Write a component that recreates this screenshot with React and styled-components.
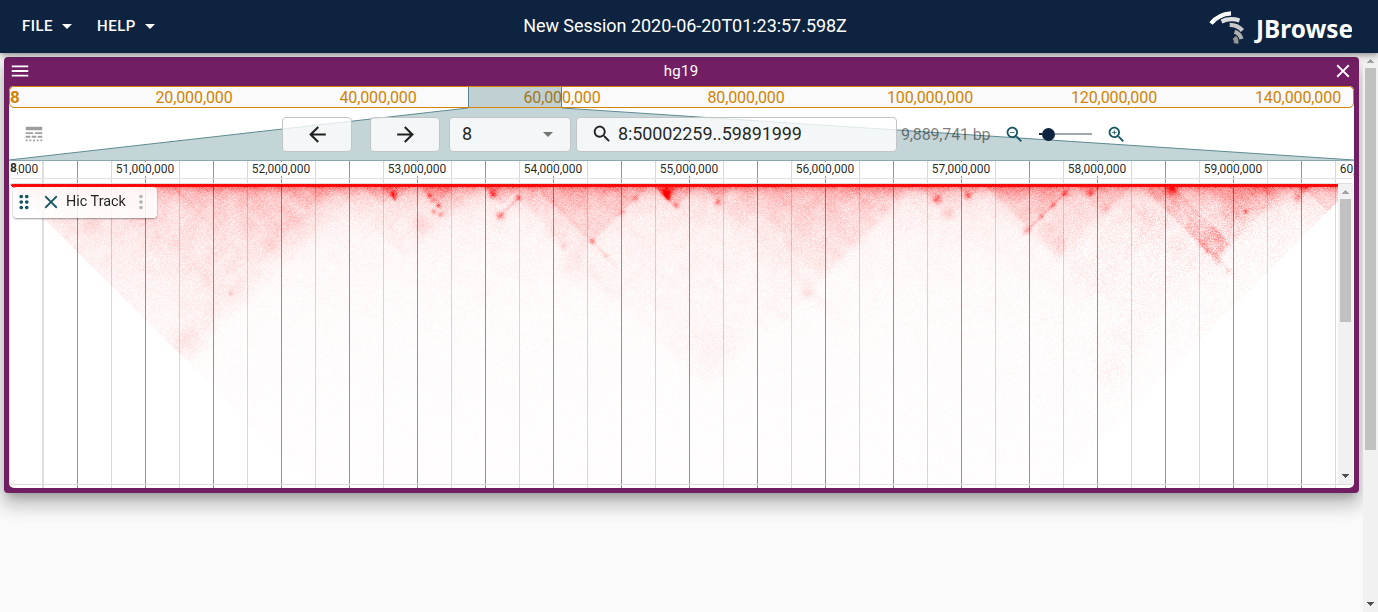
import React, { useLayoutEffect, useRef } from "react";
import styled, { createGlobalStyle } from "styled-components";

const GlobalStyle = createGlobalStyle`
  * { box-sizing: border-box; }
  html, body, #root { height: 100%; }
  body {
    margin: 0;
    overflow: hidden;
    background: #fafafa;
    font-family: Roboto, "Liberation Sans", sans-serif;
    color: rgba(0, 0, 0, 0.87);
  }
`;

const PURPLE = "#721e63";
const NAVY = "#0d233f";
const TEAL = "#135560";

const Page = styled.div`
  display: flex;
  flex-direction: column;
  height: 612px;
  width: 1378px;
`;

const AppBar = styled.header`
  display: grid;
  grid-template-columns: 1fr auto 1fr;
  align-items: center;
  height: 53px;
  padding: 0 26px 1px 22px;
  flex: none;
  background: ${NAVY};
  color: #fff;
  position: relative;
  z-index: 2;
  box-shadow: 0 2px 4px -1px rgba(0, 0, 0, 0.2), 0 4px 5px rgba(0, 0, 0, 0.14), 0 1px 10px rgba(0, 0, 0, 0.12);
`;

const MenuGroup = styled.nav`
  display: flex;
  gap: 25px;
`;

const MenuButton = styled.button`
  display: flex;
  align-items: center;
  gap: 9px;
  padding: 0;
  border: 0;
  background: none;
  color: inherit;
  font: 500 15px/24px Roboto, sans-serif;
  letter-spacing: 0.5px;
`;

const SessionName = styled.div`
  font-size: 18px;
  line-height: 24px;
  letter-spacing: -0.04px;
  margin-right: 4px;
  white-space: nowrap;
`;

const LogoSlot = styled.div`
  display: flex;
  justify-content: flex-end;
`;

const Body = styled.div`
  display: flex;
  flex: 1;
  min-height: 0;
`;

const Workspace = styled.main`
  flex: 1;
  min-width: 0;
  padding: 4px;
  overflow: hidden;
`;

const ViewFrame = styled.section`
  display: flex;
  flex-direction: column;
  height: 436px;
  padding: 0 5px 5px;
  border-radius: 4px;
  background: ${PURPLE};
  box-shadow: 0 7px 8px -4px rgba(0, 0, 0, 0.2), 0 12px 17px 2px rgba(0, 0, 0, 0.14), 0 5px 22px 4px rgba(0, 0, 0, 0.12);
`;

const TitleBar = styled.div`
  display: grid;
  grid-template-columns: 24px 1fr 22px;
  align-items: center;
  height: 29px;
  padding-bottom: 2px;
  flex: none;
  color: #fff;
`;

const ViewTitle = styled.div`
  text-align: center;
  padding-right: 3px;
  font-size: 15px;
  letter-spacing: 0.3px;
`;

const ViewContent = styled.div`
  display: flex;
  flex-direction: column;
  flex: 1;
  min-height: 0;
  background: #fff;
  border-radius: 5px;
  overflow: hidden;
`;

const Overview = styled.div`
  position: relative;
  display: flex;
  align-items: center;
  height: 22px;
  flex: none;
  padding-left: 92px;
  overflow: hidden;
  background: #fafafa;
  border: 1px solid #d38300;
  border-radius: 5px;
`;

const OverviewLabel = styled.span`
  width: 184px;
  flex: none;
  text-align: center;
  font-size: 16px;
  line-height: 20px;
  letter-spacing: -0.1px;
  color: #d38300;
  padding-top: 2px;
`;

const OverviewRef = styled.b`
  position: absolute;
  left: 0;
  top: 0;
  font-size: 17px;
  line-height: 20px;
  color: #d38300;
`;

const OverviewRegion = styled.div`
  position: absolute;
  left: 458px;
  top: -1px;
  width: 94px;
  height: 22px;
  border: 1px solid rgba(19, 85, 96, 0.6);
  background: rgba(19, 85, 96, 0.25);
`;

const Controls = styled.div`
  position: relative;
  display: flex;
  align-items: center;
  height: 52px;
  flex: none;
  padding-left: 12px;
`;

const ZoomFunnel = styled.svg`
  position: absolute;
  inset: 0;
`;

const IconCell = styled.span`
  position: relative;
  display: flex;
  align-items: center;
  justify-content: center;
  flex: none;
  width: ${(p) => p.$w}px;
  margin-left: ${(p) => p.$ml || 0}px;
`;

const Field = styled.div`
  position: relative;
  display: flex;
  align-items: center;
  justify-content: ${(p) => p.$justify || "center"};
  flex: none;
  width: ${(p) => p.$w}px;
  height: 35px;
  margin-left: ${(p) => p.$ml}px;
  padding: ${(p) => p.$pad || "0"};
  border: 1px solid #c4c4c4;
  border-radius: 4px;
  background: rgba(255, 255, 255, 0.8);
  font-size: ${(p) => p.$size || 18}px;
  line-height: 32px;
`;

const Locus = styled.span`
  margin-left: 5px;
  letter-spacing: -0.1px;
`;

const BpText = styled.span`
  position: relative;
  width: 90px;
  flex: none;
  margin-left: 4px;
  font-size: 16px;
  letter-spacing: -0.15px;
  white-space: nowrap;
  color: rgba(0, 0, 0, 0.5);
`;

const Slider = styled.div`
  position: relative;
  display: flex;
  align-items: center;
  width: 53px;
  height: 13px;
  flex: none;
  margin-left: 14px;
`;

const Rail = styled.span`
  height: 2px;
  flex: ${(p) => (p.$filled ? "0 0 3px" : "1")};
  background: ${(p) => (p.$filled ? NAVY : "#9ea7b2")};
`;

const Thumb = styled.span`
  width: 13px;
  height: 13px;
  border-radius: 50%;
  background: ${NAVY};
`;

const TracksArea = styled.div`
  position: relative;
  flex: 1;
  display: flex;
  flex-direction: column;
  min-height: 0;
  border-top: 1px solid #8aa9ae;
`;

const Grid = styled.svg`
  position: absolute;
  left: 0;
  top: 0;
  pointer-events: none;
`;

const ScaleBar = styled.div`
  position: relative;
  display: flex;
  height: 18px;
  flex: none;
  border-bottom: 1px solid #e2e2e2;
  border-radius: 0 0 4px 4px;
  overflow: hidden;
`;

const ScaleCell = styled.span`
  display: flex;
  justify-content: center;
  width: 136px;
  flex: none;
  &:first-child { margin-left: -68px; }
`;

const ScaleLabel = styled.span`
  height: 14px;
  margin-top: 1px;
  background: #fff;
  font-size: 12px;
  line-height: 14px;
`;

const ScaleRef = styled.b`
  position: absolute;
  left: 0;
  top: 0;
  padding: 0 0 0 1px;
  background: #fff;
  font-size: 12px;
  line-height: 14px;
`;

const TrackPaper = styled.div`
  position: relative;
  display: flex;
  height: 302px;
  margin-top: 4px;
  flex: none;
  border: 1px solid #dedede;
  border-right: 0;
  border-radius: 4px;
  overflow: hidden;
`;

const HicCanvas = styled.canvas`
  display: block;
  flex: none;
  width: 1328px;
  height: 300px;
  mix-blend-mode: multiply;
`;

const TrackLabel = styled.div`
  position: absolute;
  left: 3px;
  top: 3px;
  display: flex;
  align-items: center;
  width: 144px;
  height: 31px;
  padding-left: 0;
  border-radius: 4px;
  background: rgba(255, 255, 255, 0.85);
  box-shadow: 0 1px 2px rgba(0, 0, 0, 0.4);

  svg { margin-top: -1px; }
`;

const TrackName = styled.span`
  width: 60px;
  margin: -2px 4px 0 4px;
  font-size: 14.4px;
  white-space: nowrap;
`;

const ScrollTrack = styled.div`
  display: flex;
  flex-direction: column;
  align-items: center;
  justify-content: space-between;
  flex: none;
  width: ${(p) => p.$w}px;
  background: #f1f1f1;
`;

const ScrollTop = styled.div`
  display: flex;
  flex-direction: column;
  align-items: center;
`;

const ScrollThumb = styled.div`
  width: 11px;
  height: ${(p) => p.$h}px;
  background: #c1c1c1;
`;

function Arrow({ down }) {
  return (
    <svg width="15" height="15" shapeRendering="crispEdges">
      {down ? <path d="M4 5h7l-3.5 4z" fill="#505050" /> : <path d="M4 10h7l-3.5-4z" fill="#a3a3a3" />}
    </svg>
  );
}

function Scrollbar({ width, thumb }) {
  return (
    <ScrollTrack $w={width}>
      <ScrollTop>
        <Arrow />
        <ScrollThumb $h={thumb} />
      </ScrollTop>
      <Arrow down />
    </ScrollTrack>
  );
}

function Icon({ d, size = 24, color = "currentColor" }) {
  return (
    <svg width={size} height={size} viewBox="0 0 24 24" fill={color}>
      <path d={d} />
    </svg>
  );
}

const ICONS = {
  menu: "M3 18h18v-2H3v2zm0-5h18v-2H3v2zm0-7v2h18V6H3z",
  close: "M19 6.41L17.59 5 12 10.59 6.41 5 5 6.41 10.59 12 5 17.59 6.41 19 12 13.41 17.59 19 19 17.59 13.41 12z",
  back: "M20 11H7.83l5.59-5.59L12 4l-8 8 8 8 1.41-1.41L7.83 13H20v-2z",
  forward: "M12 4l-1.41 1.41L16.17 11H4v2h12.17l-5.58 5.59L12 20l8-8z",
  search:
    "M15.5 14h-.79l-.28-.27C15.41 12.59 16 11.11 16 9.5 16 5.91 13.09 3 9.5 3S3 5.91 3 9.5 5.91 16 9.5 16c1.61 0 3.09-.59 4.23-1.57l.27.28v.79l5 4.99L20.49 19l-4.99-5zm-6 0C7.01 14 5 11.99 5 9.5S7.01 5 9.5 5 14 7.01 14 9.5 11.99 14 9.5 14z",
  lines:
    "M3 16h5v-2H3v2zm6.5 0h5v-2h-5v2zm6.5 0h5v-2h-5v2zM3 20h2v-2H3v2zm4 0h2v-2H7v2zm4 0h2v-2h-2v2zm4 0h2v-2h-2v2zm4 0h2v-2h-2v2zM3 12h8v-2H3v2zm10 0h8v-2h-8v2zM3 4v4h18V4H3z",
  drag: "M11 18c0 1.1-.9 2-2 2s-2-.9-2-2 .9-2 2-2 2 .9 2 2zm-2-8c-1.1 0-2 .9-2 2s.9 2 2 2 2-.9 2-2-.9-2-2-2zm0-6c-1.1 0-2 .9-2 2s.9 2 2 2 2-.9 2-2-.9-2-2-2zm6 4c1.1 0 2-.9 2-2s-.9-2-2-2-2 .9-2 2 .9 2 2 2zm0 2c-1.1 0-2 .9-2 2s.9 2 2 2 2-.9 2-2-.9-2-2-2zm0 6c-1.1 0-2 .9-2 2s.9 2 2 2 2-.9 2-2-.9-2-2-2z",
  more: "M12 8c1.1 0 2-.9 2-2s-.9-2-2-2-2 .9-2 2 .9 2 2 2zm0 2c-1.1 0-2 .9-2 2s.9 2 2 2 2-.9 2-2-.9-2-2-2zm0 6c-1.1 0-2 .9-2 2s.9 2 2 2 2-.9 2-2-.9-2-2-2z",
};
ICONS.zoomOut = ICONS.search + "M7 9h5v1H7z";
ICONS.zoomIn = ICONS.search + "M12 10h-2v2H9v-2H7V9h2V7h1v2h2v1z";

function Caret({ color = "#fff" }) {
  return (
    <svg width="10" height="5" viewBox="0 0 10 5">
      <path d="M0 0h10L5 5z" fill={color} />
    </svg>
  );
}

function Logo() {
  return (
    <svg width="146" height="40" viewBox="0 0 146 40" fill="none" strokeWidth="4.2">
      <path d="M5 17.500Q12.500 8 25 7.300" stroke="#fff" />
      <path d="M15.500 15.500Q24 11.500 33.500 14.500" stroke="#dedede" />
      <path d="M23.700 18.800Q31.500 18.800 36.500 24.500" stroke="#c8c8c8" />
      <path d="M28.500 25.800Q34 27.500 35.500 33" stroke="#b0b0b0" />
      <path d="M28.500 31.200Q30.800 34 30 37.500" stroke="#959595" strokeWidth="4.600" />
      <text x="50" y="31.500" fill="#fff" fontFamily="Noto Sans, sans-serif" fontWeight="700" fontSize="24.500" textLength="97" lengthAdjust="spacingAndGlyphs">
        JBrowse
      </text>
    </svg>
  );
}

const ORIGIN = 10;

// Contact domains as [start, end, strength, edge softness], in page x coordinates.
const DOMAINS = [
  [-40, 362, 0.05, 14], [60, 345, 0.03, 14], [110, 325, 0.03, 20], [200, 362, 0.025, 18],
  [330, 480, 0.035, 8], [362, 402, 0.08, 4], [378, 412, 0.1, 3], [412, 482, 0.05, 7], [418, 455, 0.12, 5],
  [482, 522, 0.12, 3], [480, 504, 0.12, 3], [522, 540, 0.06, 2], [504, 650, 0.04, 4],
  [534, 650, 0.07, 3], [652, 698, 0.12, 3], [652, 682, 0.2, 3], [504, 905, 0.026, 14],
  [701, 916, 0.03, 12], [701, 736, 0.1, 3], [728, 914, 0.075, 12], [912, 984, 0.035, 6],
  [917, 953, 0.12, 4], [955, 983, 0.11, 3], [984, 1072, 0.085, 5], [984, 1132, 0.05, 10],
  [1072, 1132, 0.045, 5], [1076, 1103, 0.1, 3], [984, 1290, 0.02, 16], [1132, 1178, 0.04, 5],
  [1171, 1290, 0.08, 5], [1205, 1290, 0.06, 8], [1240, 1300, 0.04, 6], [1285, 1312, 0.1, 3],
  [1300, 1364, 0.1, 2],
];

// Focal contacts as [x, depth, radius, strength].
const LOOPS = [
  [230, 109, 2.5, 0.15], [188, 154, 16, 0.04], [90, 40, 10, 0.05], [393, 10, 3, 0.5], [394, 14, 2, 0.3],
  [429, 11, 2.5, 0.45], [432, 16, 3, 0.25], [438, 21, 2.5, 0.42], [433, 27, 2.5, 0.35], [440, 30, 2.5, 0.25],
  [421, 41, 8, 0.05], [492, 10, 4, 0.4], [500, 31, 4, 0.26], [518, 13, 3, 0.4], [592, 57, 2.6, 0.36],
  [563, 62, 2.5, 0.12], [606, 71, 2.5, 0.11], [570, 85, 12, 0.03],
  [666, 9, 4, 0.65], [668, 14, 2.5, 0.45], [676, 21, 3, 0.3], [622, 28, 3, 0.18], [635, 14, 3, 0.25],
  [717, 18, 3, 0.38], [807, 109, 5, 0.07], [783, 132, 6, 0.03], [937, 15, 4, 0.4], [967, 11, 3.5, 0.4],
  [948, 30, 6, 0.08], [1058, 62, 9, 0.06], [1050, 45, 10, 0.03],
  [1027, 46, 4, 0.25], [1041, 32, 3, 0.2], [1053, 21, 2.5, 0.22], [1065, 9, 3, 0.3],
  [1090, 9, 3, 0.4], [1106, 25, 4, 0.12], [1172, 4, 6, 0.5], [1207, 66, 3, 0.36],
  [1217, 55, 3, 0.14], [1202, 60, 4, 0.16], [1217, 77, 4, 0.12], [1228, 86, 3, 0.13],
  [1245, 27, 2.5, 0.3], [1232, 12, 7, 0.12], [1240, 15, 9, 0.1], [1232, 28, 10, 0.08],
  [1297, 13, 4, 0.22], [1303, 3, 4, 0.3], [1122, 160, 22, 0.02], [1140, 45, 18, 0.04], [1090, 95, 18, 0.02],
  [1110, 190, 14, 0.025], [715, 165, 24, 0.02],
];

// Narrow bands along one anchor: [side, anchor, fromDepth, toDepth, width, strength].
const STRIPES = [
  ["b", 330, 5, 75, 10, 0.045], ["b", 340, 90, 165, 10, 0.015], ["a", 534, 8, 84, 3, 0.055],
  ["a", 502, 45, 112, 8, 0.03], ["b", 1073, 4, 48, 2, 0.14], ["b", 531, 13, 32, 2.5, 0.1],
  ["b", 913, 20, 135, 6, 0.01], ["a", 1142, 20, 92, 3, 0.05], ["a", 1168, 0, 60, 3, 0.05],
  ["a", 110, 10, 100, 12, 0.025], ["a", 705, 15, 130, 9, 0.015], ["a", 1115, 20, 90, 16, 0.025],
];

const soft = (t, w) => 1 / (1 + Math.exp((-t * 4) / w));

function drawContacts(ctx, width, height) {
  const image = ctx.createImageData(width, height);
  let state = 90210;
  const rand = () => {
    state = (state + 0x6d2b79f5) | 0;
    let t = Math.imul(state ^ (state >>> 15), 1 | state);
    t = (t + Math.imul(t ^ (t >>> 7), 61 | t)) ^ t;
    return ((t ^ (t >>> 14)) >>> 0) / 4294967296;
  };
  const bins = Array.from({ length: 1500 }, () => 0.92 + rand() * 0.16);
  const cell = 13;
  const cols = 128;
  const lattice = Array.from({ length: cols * cols }, () => rand());
  const patch = (u, w) => {
    const i = Math.floor(u / cell);
    const j = Math.floor(w / cell);
    const fu = u / cell - i;
    const fw = w / cell - j;
    const at = (p, q) => lattice[(p % cols) * cols + (q % cols)];
    const top = at(i, j) * (1 - fu) + at(i + 1, j) * fu;
    const low = at(i, j + 1) * (1 - fu) + at(i + 1, j + 1) * fu;
    return top * (1 - fw) + low * fw;
  };
  for (let y = 0; y < height; y++) {
    for (let px = 0; px < width; px++) {
      const x = px + ORIGIN;
      const d = y;
      const a = x - d;
      const b = x + d;
      const o = (y * width + px) * 4;
      if (a < 10 || b > 1354) {
        image.data[o + 3] = 0;
        continue;
      }
      let m = 0.055 * Math.exp(-d / 42) + 0.028 * Math.exp(-d / 150);
      for (const [s, e, k, w] of DOMAINS) {
        if (a > s - w * 2 && b < e + w * 2) {
          m += k * soft(a - s, w) * soft(e - b, w) * (0.48 + 0.6 * Math.exp(-d / 45));
        }
      }
      if (a > 1132 && a < 1178 && b > 1150 && b < 1298) {
        m += (0.14 + 0.08 * soft(b - 1252, 8)) * soft(a - 1140, 4) * soft(1171 - a, 4) * soft(1290 - b, 6);
      }
      for (const [side, anchor, from, to, w, k] of STRIPES) {
        if (d >= from - 6 && d <= to + 6) {
          const t = ((side === "a" ? a : b) - anchor) / w;
          if (Math.abs(t) < 3) m += k * Math.exp(-t * t) * soft(d - from, 6) * soft(to - d, 8);
        }
      }
      for (const [lx, ld, r, k] of LOOPS) {
        const q = ((x - lx) ** 2 + (d - ld) ** 2) / (r * r);
        if (q < 6) m += k * Math.exp(-q);
      }
      m *= 0.7 + 0.6 * patch(a, b);
      m += 0.42 * Math.exp(-d / 4) + 0.1 * Math.exp(-d / 13);
      m *= bins[Math.max(0, a)] * bins[Math.min(1499, b)];
      // The right arm of the region is more thinly sampled, so its counts scatter more.
      const thin = soft(b - 1150, 60) * soft(d - 20, 20);
      const g = (rand() + rand() + rand() - 1.5) * 0.9;
      const tail = rand();
      let v = m * (1 - 0.15 * thin) + g * Math.sqrt(m) * (0.2 + 0.1 * thin);
      if (tail > 0.92) v += Math.sqrt(m) * (0.08 + 0.13 * thin) * (0.4 + rand());
      if (d < 3) v = (px + d) % 3 === 0 && d !== 1 ? 0.88 : 1;
      v = Math.max(0, Math.min(1, v));
      const c = Math.round(255 * (1 - v));
      image.data[o] = 255;
      image.data[o + 1] = c;
      image.data[o + 2] = c;
      image.data[o + 3] = 255;
    }
  }
  ctx.putImageData(image, 0, 0);
}

function HicPlot() {
  const ref = useRef(null);
  useLayoutEffect(() => {
    drawContacts(ref.current.getContext("2d"), 1328, 300);
  }, []);
  return <HicCanvas ref={ref} width={1328} height={300} />;
}

function Gridlines() {
  const lines = [];
  for (let i = 0; i < 19; i++) {
    lines.push(<rect key={`M${i}`} x={68 + i * 68} y="0" width="1" height="327" fill="#949494" />);
    lines.push(<rect key={`m${i}`} x={102 + i * 68} y="0" width="1" height="327" fill="#d8d8d8" />);
  }
  return (
    <Grid width="1345" height="327">
      <rect x="33" y="0" width="2" height="327" fill="#dedede" />
      {lines}
    </Grid>
  );
}

const OVERVIEW_TICKS = ["20,000,000", "40,000,000", "60,000,000", "80,000,000", "100,000,000", "120,000,000", "140,000,000"];
const SCALE_TICKS = Array.from({ length: 11 }, (_, i) => `${50 + i},000,000`);

export default function App() {
  return (
    <Page>
      <GlobalStyle />
      <AppBar>
        <MenuGroup>
          <MenuButton>FILE <Caret /></MenuButton>
          <MenuButton>HELP <Caret /></MenuButton>
        </MenuGroup>
        <SessionName>New Session 2020-06-20T01:23:57.598Z</SessionName>
        <LogoSlot><Logo /></LogoSlot>
      </AppBar>
      <Body>
        <Workspace>
          <ViewFrame>
            <TitleBar>
              <Icon d={ICONS.menu} size={22} />
              <ViewTitle>hg19</ViewTitle>
              <Icon d={ICONS.close} size={22} />
            </TitleBar>
            <ViewContent>
              <Overview>
                <OverviewRef>8</OverviewRef>
                {OVERVIEW_TICKS.map((t) => <OverviewLabel key={t}>{t}</OverviewLabel>)}
                <OverviewRegion />
              </Overview>
              <Controls>
                <ZoomFunnel width="1345" height="52">
                  <path d="M459 0H553L1345 52H0z" fill="#c4d5d8" />
                  <path d="M459 0L0 52M553 0L1345 52" stroke="#5d8b92" fill="none" />
                </ZoomFunnel>
                <IconCell $w={26}><Icon d={ICONS.lines} size={22} color="#9e9e9e" /></IconCell>
                <Field $w={70} $ml={235}><Icon d={ICONS.back} size={25} /></Field>
                <Field $w={70} $ml={18}><Icon d={ICONS.forward} size={25} /></Field>
                <Field $w={122} $ml={9} $justify="space-between" $pad="0 17px 0 12px">
                  8 <Caret color="#757575" />
                </Field>
                <Field $w={321} $ml={5} $justify="flex-start" $pad="0 0 0 14px">
                  <Icon d={ICONS.search} size={22} />
                  <Locus>8:50002259..59891999</Locus>
                </Field>
                <BpText>9,889,741 bp</BpText>
                <IconCell $w={22} $ml={12}><Icon d={ICONS.zoomOut} size={21} color={TEAL} /></IconCell>
                <Slider>
                  <Rail $filled />
                  <Thumb />
                  <Rail />
                </Slider>
                <IconCell $w={22} $ml={13}><Icon d={ICONS.zoomIn} size={21} color={TEAL} /></IconCell>
              </Controls>
              <TracksArea>
                <Gridlines />
                <ScaleBar>
                  {SCALE_TICKS.map((t) => <ScaleCell key={t}><ScaleLabel>{t}</ScaleLabel></ScaleCell>)}
                  <ScaleRef>8</ScaleRef>
                </ScaleBar>
                <TrackPaper>
                  <HicPlot />
                  <Scrollbar width={15} thumb={123} />
                  <TrackLabel>
                    <Icon d={ICONS.drag} size={22} color={TEAL} />
                    <IconCell $w={22} $ml={5}><Icon d={ICONS.close} size={22} color={TEAL} /></IconCell>
                    <TrackName>Hic Track</TrackName>
                    <Icon d={ICONS.more} size={22} color="#b5b5b5" />
                  </TrackLabel>
                </TrackPaper>
              </TracksArea>
            </ViewContent>
          </ViewFrame>
        </Workspace>
        <Scrollbar width={15} thumb={382} />
      </Body>
    </Page>
  );
}
